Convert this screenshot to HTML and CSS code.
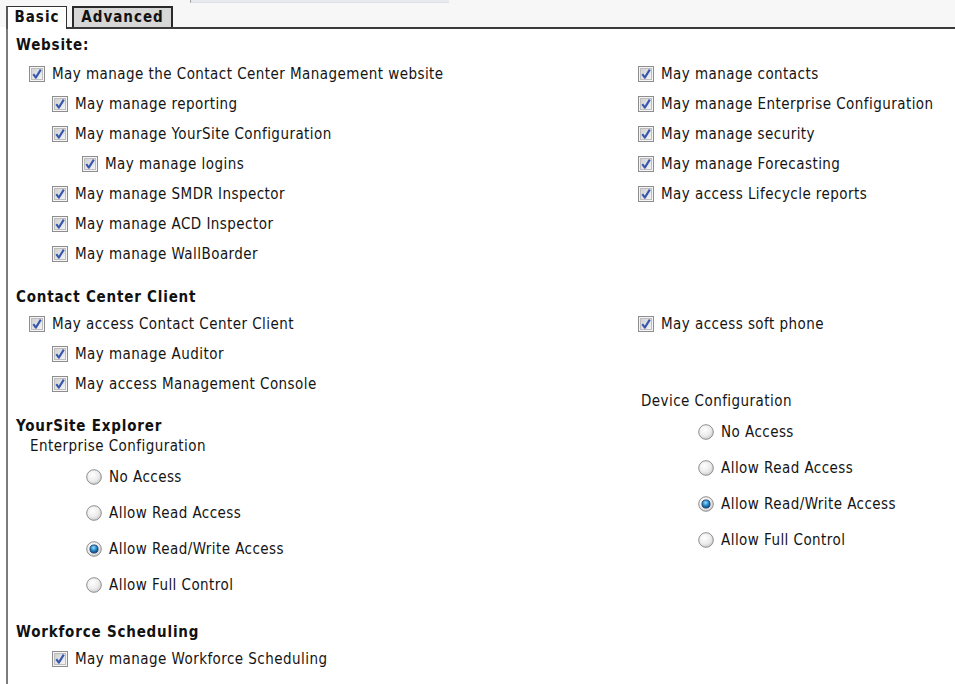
FILE: index.html
```html
<!DOCTYPE html>
<html>
<head>
<meta charset="utf-8">
<link rel="stylesheet" href="styles.css">
</head>
<body>
<svg class="sprite" xmlns="http://www.w3.org/2000/svg">
  <defs>
    <linearGradient id="cbg" x1="0" y1="0" x2="1" y2="1">
      <stop offset="0" stop-color="#cfcfcf"/>
      <stop offset="1" stop-color="#f6f6f6"/>
    </linearGradient>
    <radialGradient id="rg" cx="0.4" cy="0.35" r="0.7">
      <stop offset="0" stop-color="#ffffff"/>
      <stop offset="0.6" stop-color="#ececec"/>
      <stop offset="1" stop-color="#c9c9c9"/>
    </radialGradient>
    <radialGradient id="rdot" cx="0.45" cy="0.35" r="0.65">
      <stop offset="0" stop-color="#9fdcff"/>
      <stop offset="0.5" stop-color="#2a8fd0"/>
      <stop offset="1" stop-color="#0b3f75"/>
    </radialGradient>
    <symbol id="cb" viewBox="0 0 16 16">
      <rect x="0.5" y="0.5" width="15" height="15" fill="#f5f5f5" stroke="#8d8d8d"/>
      <rect x="2.5" y="2.5" width="11" height="11" fill="url(#cbg)" stroke="#bdbdbd"/>
      <path d="M4.3 8.2 L6.8 11.6 L11.8 3.6" fill="none" stroke="#3656b0" stroke-width="2.1" stroke-linejoin="round"/>
    </symbol>
    <symbol id="rb" viewBox="0 0 16 16">
      <circle cx="8" cy="8" r="7.3" fill="url(#rg)" stroke="#8e8e8e" stroke-width="1"/>
    </symbol>
    <symbol id="rbon" viewBox="0 0 16 16">
      <circle cx="8" cy="8" r="7.3" fill="url(#rg)" stroke="#8e8e8e" stroke-width="1"/>
      <circle cx="8" cy="8" r="4.1" fill="url(#rdot)" stroke="#1d3b66" stroke-width="0.8"/>
    </symbol>
  </defs>
</svg>

<div class="top">
  <div class="stub"></div>
  <div class="tabs">
    <div class="tab tab-active">Basic</div>
    <div class="tab tab-adv">Advanced</div>
  </div>
</div>

<div class="panel">
  <section class="sec sec-web">
    <h2>Website:</h2>
    <div class="cols">
      <div class="col">
        <div class="cb l1"><svg class="ic"><use href="#cb"/></svg><span>May manage the Contact Center Management website</span></div>
        <div class="cb l2"><svg class="ic"><use href="#cb"/></svg><span>May manage reporting</span></div>
        <div class="cb l2"><svg class="ic"><use href="#cb"/></svg><span>May manage YourSite Configuration</span></div>
        <div class="cb l3"><svg class="ic"><use href="#cb"/></svg><span>May manage logins</span></div>
        <div class="cb l2"><svg class="ic"><use href="#cb"/></svg><span>May manage SMDR Inspector</span></div>
        <div class="cb l2"><svg class="ic"><use href="#cb"/></svg><span>May manage ACD Inspector</span></div>
        <div class="cb l2"><svg class="ic"><use href="#cb"/></svg><span>May manage WallBoarder</span></div>
      </div>
      <div class="col">
        <div class="cb"><svg class="ic"><use href="#cb"/></svg><span>May manage contacts</span></div>
        <div class="cb"><svg class="ic"><use href="#cb"/></svg><span>May manage Enterprise Configuration</span></div>
        <div class="cb"><svg class="ic"><use href="#cb"/></svg><span>May manage security</span></div>
        <div class="cb"><svg class="ic"><use href="#cb"/></svg><span>May manage Forecasting</span></div>
        <div class="cb"><svg class="ic"><use href="#cb"/></svg><span>May access Lifecycle reports</span></div>
      </div>
    </div>
  </section>

  <section class="sec sec-ccc">
    <h2>Contact Center Client</h2>
    <div class="cols">
      <div class="col">
        <div class="cb l1"><svg class="ic"><use href="#cb"/></svg><span>May access Contact Center Client</span></div>
        <div class="cb l2"><svg class="ic"><use href="#cb"/></svg><span>May manage Auditor</span></div>
        <div class="cb l2"><svg class="ic"><use href="#cb"/></svg><span>May access Management Console</span></div>
      </div>
      <div class="col">
        <div class="cb"><svg class="ic"><use href="#cb"/></svg><span>May access soft phone</span></div>
      </div>
    </div>
  </section>

  <section class="sec sec-yse cols">
    <div class="col">
      <h2>YourSite Explorer</h2>
      <div class="grp-label grp-left">Enterprise Configuration</div>
      <div class="radios radios-left">
        <div class="rb"><svg class="ic"><use href="#rb"/></svg><span>No Access</span></div>
        <div class="rb"><svg class="ic"><use href="#rb"/></svg><span>Allow Read Access</span></div>
        <div class="rb"><svg class="ic"><use href="#rbon"/></svg><span>Allow Read/Write Access</span></div>
        <div class="rb"><svg class="ic"><use href="#rb"/></svg><span>Allow Full Control</span></div>
      </div>
    </div>
    <div class="col col-device">
      <div class="grp-label grp-right">Device Configuration</div>
      <div class="radios radios-right">
        <div class="rb"><svg class="ic"><use href="#rb"/></svg><span>No Access</span></div>
        <div class="rb"><svg class="ic"><use href="#rb"/></svg><span>Allow Read Access</span></div>
        <div class="rb"><svg class="ic"><use href="#rbon"/></svg><span>Allow Read/Write Access</span></div>
        <div class="rb"><svg class="ic"><use href="#rb"/></svg><span>Allow Full Control</span></div>
      </div>
    </div>
  </section>

  <section class="sec sec-wfs">
    <h2>Workforce Scheduling</h2>
    <div class="cols">
      <div class="col">
        <div class="cb l2"><svg class="ic"><use href="#cb"/></svg><span>May manage Workforce Scheduling</span></div>
      </div>
    </div>
  </section>
</div>
</body>
</html>
```

FILE: styles.css
```css
html, body {
  margin: 0;
  padding: 0;
  background: #ffffff;
}

body {
  font-family: "DejaVu Sans Condensed", "DejaVu Sans", sans-serif;
  font-size: 15px;
  letter-spacing: 0.45px;
  color: #141414;
  overflow: hidden;
}

.sprite {
  width: 0;
  height: 0;
  overflow: hidden;
  display: block;
}

.top {
  background: #f7f7f7;
  padding-left: 6px;
}

.stub {
  margin-left: 184px;
  width: 258px;
  height: 2px;
  background: #e7eaef;
  border-bottom: 1px solid #dde1e7;
  border-left: 1px solid #9aa0a8;
}

.tabs {
  display: flex;
  align-items: flex-start;
  gap: 5px;
  margin-top: 3px;
  height: 21px;
}

.tab {
  box-sizing: border-box;
  height: 21px;
  border: 1px solid #1e1e1e;
  border-bottom: none;
  font-weight: bold;
  letter-spacing: 1px;
  line-height: 21px;
  text-align: center;
  color: #121212;
}

.tab-active {
  width: 61px;
  height: 23px;
  margin-bottom: -2px;
  background: #ffffff;
  border-color: #333333;
  border-left: 2px solid #5a5a5a;
  position: relative;
  z-index: 1;
}

.tab-adv {
  width: 101px;
  background: #d7d7d7;
  border: 2px solid #2a2a2a;
  border-bottom: none;
  line-height: 19px;
}

.panel {
  box-sizing: border-box;
  min-height: calc(100vh - 27px);
  margin-left: 6px;
  border-left: 2px solid #7c7c7c;
  border-top: 2px solid #3a3a3a;
  padding: 6px 0 10px 8px;
}

h2 {
  margin: 0;
  font-size: 15px;
  font-weight: bold;
  letter-spacing: 0.8px;
  line-height: 20px;
  color: #111111;
}

.cols {
  display: grid;
  grid-template-columns: 622px 1fr;
}

.sec-web .cols { margin-top: 4px; }
.sec-ccc { margin-top: 18px; }
.sec-ccc .cols { margin-top: 2px; }
.sec-yse { margin-top: 17px; }
.sec-wfs { margin-top: 19px; }
.sec-wfs .cols { margin-top: 2px; }

.cb, .rb {
  display: flex;
  align-items: center;
  white-space: nowrap;
}

.cb { height: 30px; }
.rb { height: 36px; }

.ic {
  width: 16px;
  height: 16px;
  flex: none;
  margin-right: 7px;
}

.l1 { margin-left: 13px; }
.l2 { margin-left: 36px; }
.l3 { margin-left: 66px; }

.grp-label {
  line-height: 20px;
}

.grp-left { margin-left: 14px; }
.grp-right { margin-left: 3px; }

.col-device { margin-top: -25px; }

.radios { margin-top: 3px; }
.radios-left .rb { margin-left: 70px; }
.radios-right .rb { margin-left: 60px; }
```
